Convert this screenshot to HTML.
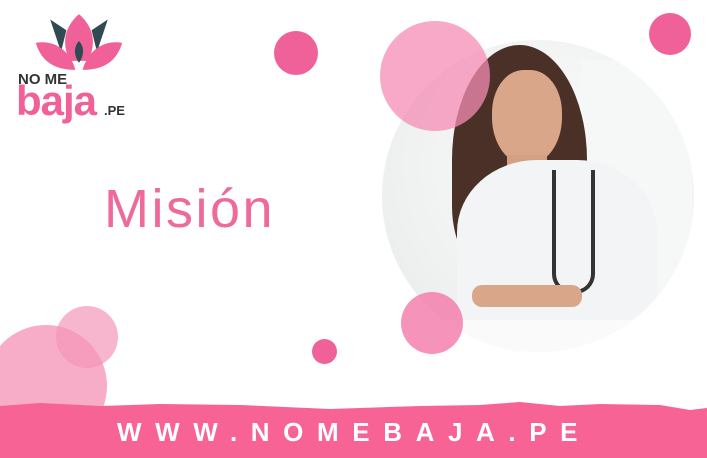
<!DOCTYPE html><html><head><style>
body{margin:0;width:707px;height:458px;position:relative;overflow:hidden;background:#fff;font-family:"Liberation Sans",sans-serif}
.c{position:absolute;border-radius:50%}
</style></head><body>
<div class="c" style="left:382px;top:40px;width:312px;height:312px;background:radial-gradient(circle at 60% 40%,#fbfbfb,#eef0ef 70%,#e4e6e5);overflow:hidden">
 <div style="position:absolute;left:200px;top:20px;width:110px;height:250px;background:#f6f7f7"></div>
 <div style="position:absolute;left:70px;top:5px;width:135px;height:230px;background:#4a3026;border-radius:50% 50% 30% 30%"></div>
 <div style="position:absolute;left:110px;top:30px;width:70px;height:95px;background:#d9a68a;border-radius:45% 45% 50% 50%"></div>
 <div style="position:absolute;left:125px;top:115px;width:40px;height:40px;background:#d4a084"></div>
 <div style="position:absolute;left:75px;top:120px;width:200px;height:180px;background:#f3f4f6;border-radius:40% 40% 10% 10%"></div>
 <div style="position:absolute;left:170px;top:130px;width:35px;height:120px;border:4px solid #333;border-top:none;border-radius:0 0 20px 20px"></div>
 <div style="position:absolute;left:90px;top:245px;width:110px;height:22px;background:#d9a68a;border-radius:10px"></div>
 <div style="position:absolute;left:40px;top:280px;width:270px;height:40px;background:#fafafa"></div>
</div>
<div class="c" style="left:380px;top:21px;width:110px;height:110px;background:rgba(244,140,180,0.75)"></div>
<div class="c" style="left:274px;top:31px;width:44px;height:44px;background:#f0619a"></div>
<div class="c" style="left:649px;top:13px;width:42px;height:42px;background:#f0619a"></div>
<div class="c" style="left:401px;top:292px;width:62px;height:62px;background:rgba(242,120,170,0.8)"></div>
<div class="c" style="left:312px;top:339px;width:25px;height:25px;background:#f0619a"></div>
<div class="c" style="left:-15px;top:325px;width:122px;height:122px;background:#f7acc7"></div>
<div class="c" style="left:56px;top:306px;width:62px;height:62px;background:rgba(245,150,185,0.7)"></div>
<svg style="position:absolute;left:0;top:398px" width="707" height="60"><path d="M0 8 L40 5 L100 8 L160 6 L240 7 L330 11 L420 8 L480 7 L520 4 L560 8 L600 6 L660 7 L690 12 L707 10 L707 60 L0 60Z" fill="#f76394"/></svg>
<div style="position:absolute;left:117px;top:418px;font-size:26px;font-weight:bold;color:#fff;letter-spacing:13.6px;line-height:28px">WWW.NOMEBAJA.PE</div>
<div style="position:absolute;left:104px;top:178px;font-size:54px;color:#ee6a9b;line-height:62px;letter-spacing:2.5px">Misión</div>
<svg style="position:absolute;left:34px;top:12px" width="90" height="60" viewBox="0 0 100 66">
 <path d="M18 8 L36 20 L30 44 Z" fill="#2f4a52"/>
 <path d="M82 8 L64 20 L70 44 Z" fill="#2f4a52"/>
 <path d="M50 2 C66 16 70 34 60 54 L40 54 C30 34 34 16 50 2Z" fill="#f0619a"/>
 <path d="M2 34 C22 30 40 42 46 64 C22 64 8 54 2 34Z" fill="#f0619a"/>
 <path d="M98 34 C78 30 60 42 54 64 C78 64 92 54 98 34Z" fill="#f0619a"/>
 <path d="M50 32 C56 38 56 48 50 56 C44 48 44 38 50 32Z" fill="#2f4a52"/>
</svg>
<div style="position:absolute;left:18px;top:72px;font-size:15px;font-weight:bold;color:#333;line-height:16px">NO ME</div>
<div style="position:absolute;left:16px;top:80px;font-size:42px;font-weight:bold;color:#f0619a;line-height:42px;letter-spacing:-1px">baja</div>
<div style="position:absolute;left:104px;top:103px;font-size:13px;font-weight:bold;color:#333">.PE</div>
</body></html>
